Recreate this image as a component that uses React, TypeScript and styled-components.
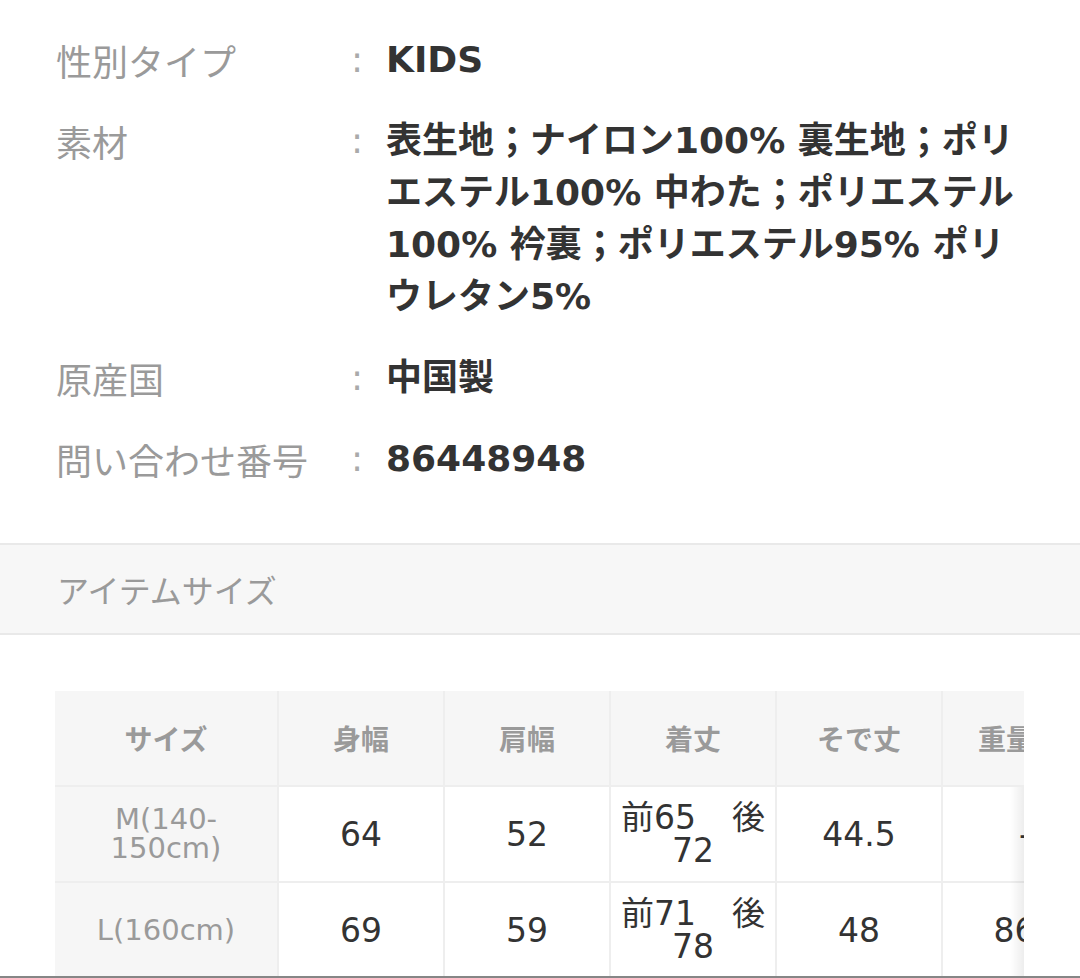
import styled, { createGlobalStyle } from 'styled-components';

const GlobalStyle = createGlobalStyle`
  html, body {
    margin: 0;
    padding: 0;
    background: #fff;
  }
  body {
    font-family: "DejaVu Sans", "Noto Sans CJK JP", sans-serif;
    -webkit-font-smoothing: antialiased;
  }
`;

const Page = styled.div`
  height: 978px;
  box-sizing: border-box;
  overflow: hidden;
  border-bottom: 2px solid #868686;
`;

const SpecList = styled.dl`
  margin: 0;
  padding: 34px 20px 0 56px;
  display: flex;
  flex-direction: column;
  gap: 29px;
`;

const SpecRow = styled.div`
  display: grid;
  grid-template-columns: 295px 35px 1fr;
  font-size: 36px;
  line-height: 52px;
`;

const Label = styled.dt`
  margin: 0;
  color: #9a9a9a;
  font-family: "Noto Sans CJK JP", sans-serif;
`;

const Colon = styled.span`
  color: #aaa;
`;

const Value = styled.dd`
  margin: 0;
  color: #333;
  font-weight: 700;
  white-space: nowrap;
`;

const SectionHead = styled.h2`
  margin: 58px 0 0;
  height: 88px;
  padding: 0 57px;
  display: flex;
  align-items: center;
  background: #f7f7f7;
  border-top: 2px solid #e9e9e9;
  border-bottom: 2px solid #e9e9e9;
  color: #9a9a9a;
  font-family: "Noto Sans CJK JP", sans-serif;
  font-size: 32px;
  font-weight: 400;
`;

const TableScroller = styled.div`
  position: relative;
  margin: 56px 0 0 55px;
  width: 969px;
  overflow: hidden;
`;

const EdgeShadow = styled.div`
  position: absolute;
  top: 96px;
  right: 0;
  bottom: 0;
  width: 14px;
  background: linear-gradient(to right, rgba(0, 0, 0, 0), rgba(0, 0, 0, 0.07));
  pointer-events: none;
`;

const SizeTable = styled.table`
  border-collapse: separate;
  border-spacing: 0;
  table-layout: fixed;
  width: 1054px;
`;

const Col = styled.col<{ $w: number }>`
  width: ${(p) => p.$w}px;
`;

const HeadCell = styled.th`
  box-sizing: border-box;
  height: 96px;
  padding: 0 10px;
  background: #f6f6f6;
  border-right: 2px solid #eeeeee;
  border-bottom: 2px solid #eeeeee;
  color: #9a9a9a;
  font-family: "Noto Sans CJK JP", sans-serif;
  font-size: 28px;
  font-weight: 700;
  text-align: center;
  vertical-align: middle;
  white-space: nowrap;
`;

const SizeCell = styled.th`
  box-sizing: border-box;
  height: 96px;
  padding: 0 10px;
  background: #f6f6f6;
  border-right: 2px solid #eeeeee;
  border-bottom: 2px solid #eeeeee;
  color: #9a9a9a;
  font-size: 29px;
  font-weight: 400;
  line-height: 29px;
  text-align: center;
  vertical-align: middle;
`;

const Cell = styled.td`
  box-sizing: border-box;
  height: 96px;
  padding: 0 10px;
  background: #fff;
  border-right: 2px solid #eeeeee;
  border-bottom: 2px solid #eeeeee;
  color: #333;
  font-size: 33px;
  line-height: 33px;
  text-align: center;
  vertical-align: middle;
  white-space: nowrap;
`;

const SplitValue = styled.div`
  display: flex;
  flex-direction: column;
`;

const SplitTop = styled.div`
  display: flex;
  justify-content: space-between;
`;

const SplitBottom = styled.div`
  text-align: center;
`;

const specs = [
  { label: '性別タイプ', lines: ['KIDS'] },
  {
    label: '素材',
    lines: [
      '表生地；ナイロン100% 裏生地；ポリ',
      'エステル100% 中わた；ポリエステル',
      '100% 衿裏；ポリエステル95% ポリ',
      'ウレタン5%',
    ],
  },
  { label: '原産国', lines: ['中国製'] },
  { label: '問い合わせ番号', lines: ['86448948'] },
];

const headers = ['サイズ', '身幅', '肩幅', '着丈', 'そで丈', '重量(g)'];

const rows = [
  { size: ['M(140-', '150cm)'], body: '64', shoulder: '52', front: '前65', back: ['後', '72'], sleeve: '44.5', weight: '-' },
  { size: ['L(160cm)'], body: '69', shoulder: '59', front: '前71', back: ['後', '78'], sleeve: '48', weight: '860' },
];

const App = () => {
  return (
    <Page>
      <GlobalStyle />
      <SpecList>
        {specs.map((s) => (
          <SpecRow key={s.label}>
            <Label>{s.label}</Label>
            <Colon>:</Colon>
            <Value>
              {s.lines.map((l, i) => (
                <span key={i}>
                  {i > 0 && <br />}
                  {l}
                </span>
              ))}
            </Value>
          </SpecRow>
        ))}
      </SpecList>

      <SectionHead>アイテムサイズ</SectionHead>

      <TableScroller>
        <SizeTable>
          <colgroup>
            <Col $w={224} />
            <Col $w={166} />
            <Col $w={166} />
            <Col $w={166} />
            <Col $w={166} />
            <Col $w={166} />
          </colgroup>
          <thead>
            <tr>
              {headers.map((h) => (
                <HeadCell key={h}>{h}</HeadCell>
              ))}
            </tr>
          </thead>
          <tbody>
            {rows.map((r) => (
              <tr key={r.body}>
                <SizeCell>
                  {r.size.map((s, i) => (
                    <span key={i}>
                      {i > 0 && <br />}
                      {s}
                    </span>
                  ))}
                </SizeCell>
                <Cell>{r.body}</Cell>
                <Cell>{r.shoulder}</Cell>
                <Cell>
                  <SplitValue>
                    <SplitTop>
                      <span>{r.front}</span>
                      <span>{r.back[0]}</span>
                    </SplitTop>
                    <SplitBottom>{r.back[1]}</SplitBottom>
                  </SplitValue>
                </Cell>
                <Cell>{r.sleeve}</Cell>
                <Cell>{r.weight}</Cell>
              </tr>
            ))}
          </tbody>
        </SizeTable>
        <EdgeShadow />
      </TableScroller>
    </Page>
  );
};

export default App;
